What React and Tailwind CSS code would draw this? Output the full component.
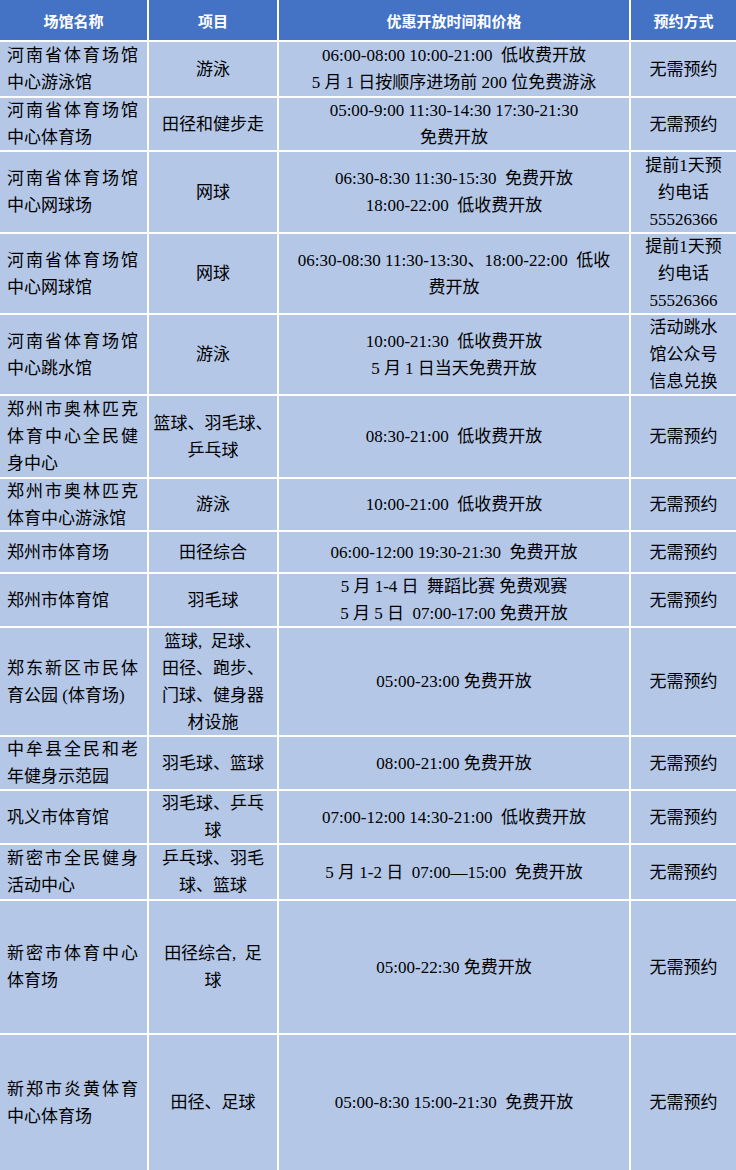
import React from 'react';

const rows = [
    {
        name: '河南省体育场馆中心游泳馆',
        item: ['游泳'],
        time: ['06:00-08:00 10:00-21:00  低收费开放', '5 月 1 日按顺序进场前 200 位免费游泳'],
        book: ['无需预约'],
    },
    {
        name: '河南省体育场馆中心体育场',
        item: ['田径和健步走'],
        time: ['05:00-9:00 11:30-14:30 17:30-21:30', '免费开放'],
        book: ['无需预约'],
    },
    {
        name: '河南省体育场馆中心网球场',
        item: ['网球'],
        time: ['06:30-8:30 11:30-15:30  免费开放', '18:00-22:00  低收费开放'],
        book: ['提前1天预', '约电话', '55526366'],
    },
    {
        name: '河南省体育场馆中心网球馆',
        item: ['网球'],
        time: ['06:30-08:30 11:30-13:30、18:00-22:00  低收', '费开放'],
        book: ['提前1天预', '约电话', '55526366'],
    },
    {
        name: '河南省体育场馆中心跳水馆',
        item: ['游泳'],
        time: ['10:00-21:30  低收费开放', '5 月 1 日当天免费开放'],
        book: ['活动跳水', '馆公众号', '信息兑换'],
    },
    {
        name: '郑州市奥林匹克体育中心全民健身中心',
        item: ['篮球、羽毛球、', '乒乓球'],
        time: ['08:30-21:00  低收费开放'],
        book: ['无需预约'],
    },
    {
        name: '郑州市奥林匹克体育中心游泳馆',
        item: ['游泳'],
        time: ['10:00-21:00  低收费开放'],
        book: ['无需预约'],
    },
    {
        name: '郑州市体育场',
        item: ['田径综合'],
        time: ['06:00-12:00 19:30-21:30  免费开放'],
        book: ['无需预约'],
    },
    {
        name: '郑州市体育馆',
        item: ['羽毛球'],
        time: ['5 月 1-4 日  舞蹈比赛 免费观赛', '5 月 5 日  07:00-17:00 免费开放'],
        book: ['无需预约'],
    },
    {
        name: '郑东新区市民体育公园 (体育场)',
        item: ['篮球,  足球、', '田径、跑步、', '门球、健身器', '材设施'],
        time: ['05:00-23:00 免费开放'],
        book: ['无需预约'],
    },
    {
        name: '中牟县全民和老年健身示范园',
        item: ['羽毛球、篮球'],
        time: ['08:00-21:00 免费开放'],
        book: ['无需预约'],
    },
    {
        name: '巩义市体育馆',
        item: ['羽毛球、乒乓', '球'],
        time: ['07:00-12:00 14:30-21:00  低收费开放'],
        book: ['无需预约'],
    },
    {
        name: '新密市全民健身活动中心',
        item: ['乒乓球、羽毛', '球、篮球'],
        time: ['5 月 1-2 日  07:00—15:00  免费开放'],
        book: ['无需预约'],
    },
    {
        name: '新密市体育中心体育场',
        item: ['田径综合,  足', '球'],
        time: ['05:00-22:30 免费开放'],
        book: ['无需预约'],
    },
    {
        name: '新郑市炎黄体育中心体育场',
        item: ['田径、足球'],
        time: ['05:00-8:30 15:00-21:30  免费开放'],
        book: ['无需预约'],
    },
];

function Lines({ lines }) {
    return (
        <div className="w-full text-center whitespace-pre">
            {lines.map((l, i) => (
                <div key={i}>{l}</div>
            ))}
        </div>
    );
}

export default function App() {
    return (
        <div
            className="w-full h-[1170px] bg-white text-[17px] leading-[27px] text-black"
            style={{ fontFamily: '"Liberation Serif", "Noto Sans CJK SC", serif' }}
        >
            <div className="grid h-full grid-cols-[147px_128px_350px_1fr] grid-rows-[40px_54px_52px_80px_79px_79px_81px_51px_40px_52px_107px_52px_52px_54px_132px_1fr] gap-[2px]">
                {/* Header */}
                {['场馆名称', '项目', '优惠开放时间和价格', '预约方式'].map((h) => (
                    <div
                        key={h}
                        className="flex items-center justify-center bg-[#4472c4] text-white text-[15px] font-bold"
                        style={{ fontFamily: '"Noto Sans CJK SC", sans-serif' }}
                    >
                        {h}
                    </div>
                ))}

                {rows.map((r, i) => (
                    <React.Fragment key={i}>
                        <div className="flex items-center bg-[#b4c7e7] pl-[7px] pr-[9px]">
                            <div className="w-full text-justify">{r.name}</div>
                        </div>
                        <div className="flex items-center bg-[#b4c7e7] px-1">
                            <Lines lines={r.item} />
                        </div>
                        <div className="flex items-center bg-[#b4c7e7] px-1">
                            <Lines lines={r.time} />
                        </div>
                        <div className="flex items-center bg-[#b4c7e7] px-1">
                            <Lines lines={r.book} />
                        </div>
                    </React.Fragment>
                ))}
            </div>
        </div>
    );
}
